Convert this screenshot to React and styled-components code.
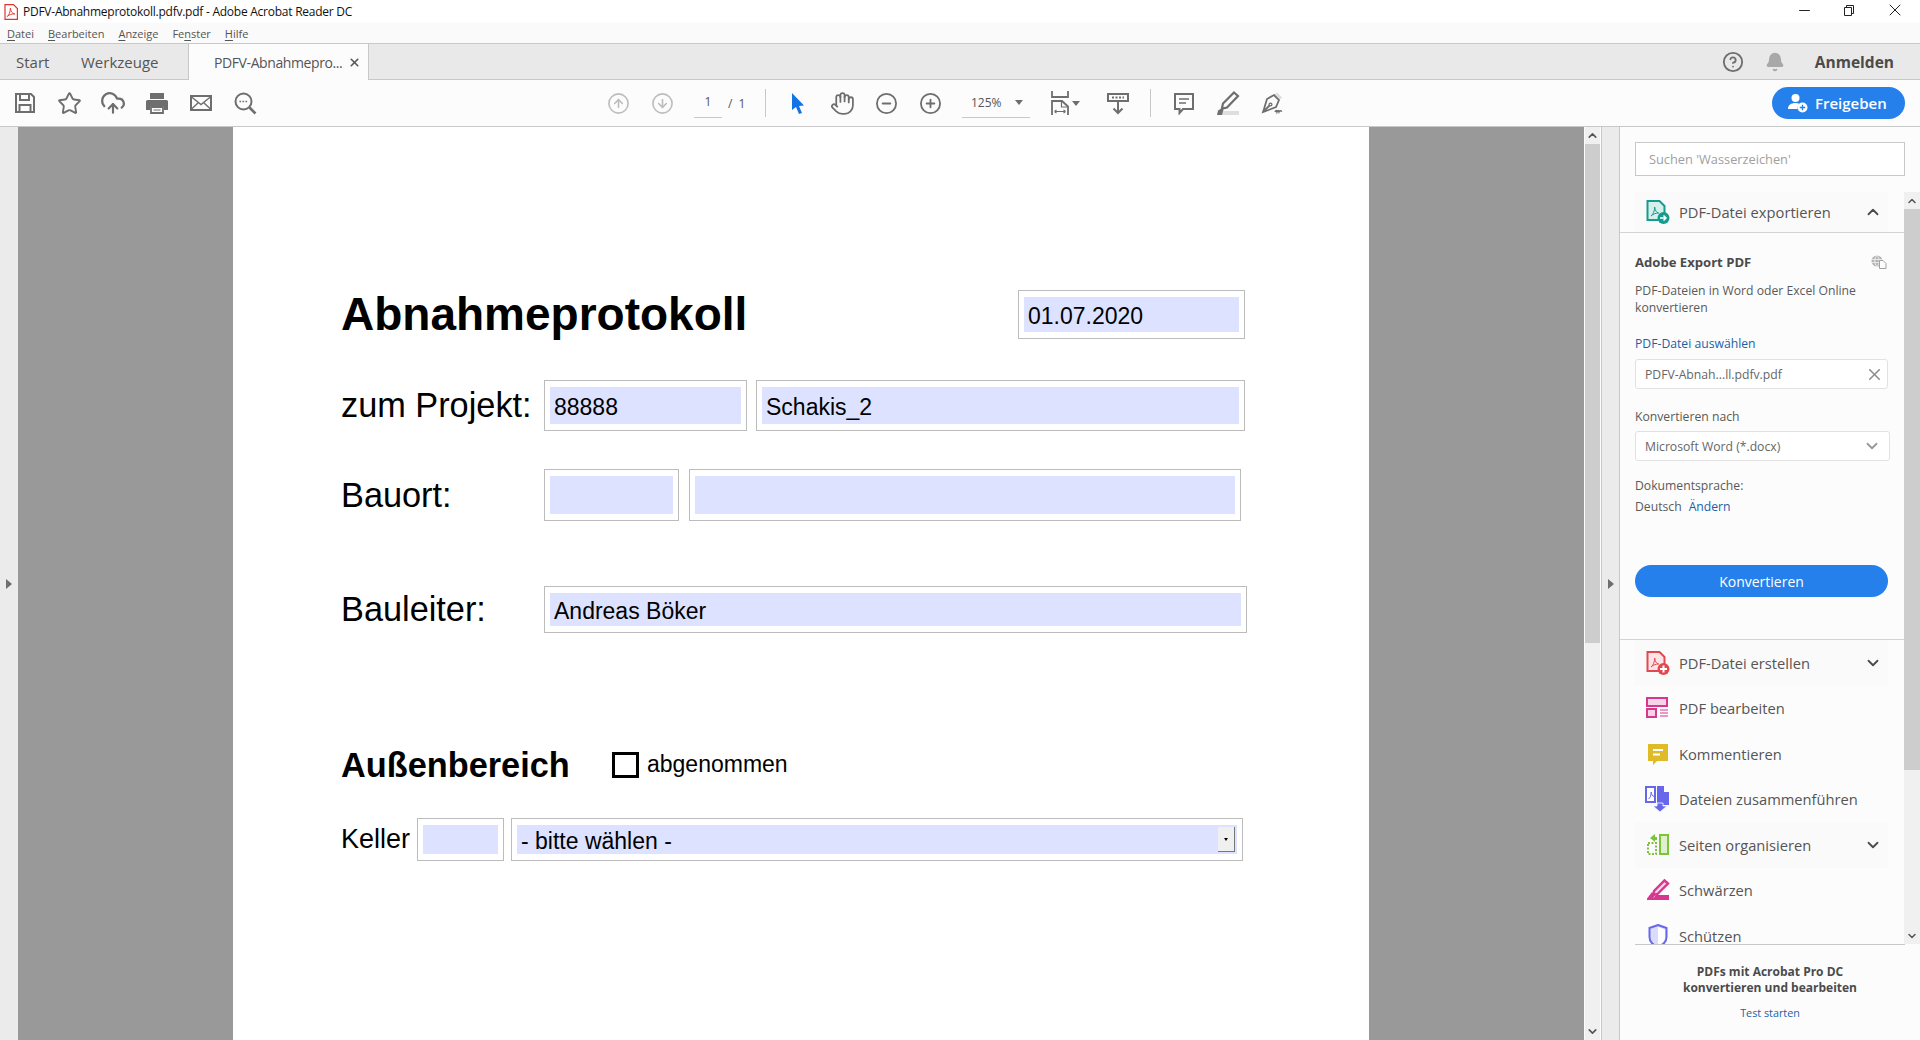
import React from "react";
import styled, { createGlobalStyle } from "styled-components";
import {
  Bell, ChevronDown, ChevronUp, CircleArrowDown, CircleArrowUp, CircleHelp, CircleMinus,
  CirclePlus, CloudUpload, Hand, Minus, Star, X,
} from "lucide-react";

const UI_FONT = `"Open Sans", "Noto Sans", sans-serif`;
const PDF_FONT = `"Liberation Sans", Arial, sans-serif`;

const GlobalStyle = createGlobalStyle`
  html, body { margin: 0; padding: 0; height: 100%; overflow: hidden; background: #fcfcfc; }
  * { box-sizing: border-box; }
  #root { height: 100%; }
`;

const Window = styled.div`
  width: 1920px;
  height: 1040px;
  display: flex;
  flex-direction: column;
  overflow: hidden;
  font-family: ${UI_FONT};
  color: #4b4b4b;
`;

const TitleBar = styled.div`
  height: 23px;
  background: #fff;
  display: flex;
  align-items: center;
  padding-left: 4px;
  font-size: 12px;
  color: #111;
`;
const TitleText = styled.span`
  margin-left: 5px;
  letter-spacing: -0.25px;
`;
const WindowButtons = styled.div`
  margin-left: auto;
  display: flex;
  align-items: center;
  padding: 0 15px 3px 0;
  gap: 31px;
  color: #222;
`;
const MenuBar = styled.div`
  height: 21px;
  background: #fafafa;
  border-bottom: 1px solid #c8c8c8;
  display: flex;
  align-items: center;
  gap: 14px;
  padding-left: 7px;
  font-size: 11px;
  color: #555;
`;
const TabBar = styled.div`
  height: 36px;
  background: #e9e9e9;
  border-bottom: 1px solid #c8c8c8;
  display: flex;
  align-items: stretch;
  font-size: 15px;
  color: #555;
`;
const PlainTab = styled.div`
  display: flex;
  align-items: center;
  margin-left: ${(p) => p.$left}px;
  width: ${(p) => p.$width}px;
`;
const ActiveTab = styled.div`
  width: 181px;
  height: 36px;
  margin-left: 30px;
  padding-left: 25px;
  background: #fcfcfc;
  border-left: 1px solid #c8c8c8;
  border-right: 1px solid #c8c8c8;
  display: flex;
  align-items: center;
  gap: 6px;
  font-size: 14px;
  letter-spacing: -0.4px;
  white-space: nowrap;
`;
const TabTools = styled.div`
  margin-left: auto;
  display: flex;
  align-items: center;
  padding-right: 26px;
  color: #6e6e6e;
`;
const BellSlot = styled.span`
  display: flex;
  margin-left: 21px;
`;
const SignIn = styled.span`
  margin-left: 30px;
  font-weight: 700;
  font-size: 15.5px;
  color: #4b4b4b;
`;

const Toolbar = styled.div`
  height: 47px;
  background: #fcfcfc;
  border-bottom: 1px solid #c8c8c8;
  display: flex;
  align-items: center;
  padding-left: 3px;
`;
const ToolButton = styled.div`
  flex: none;
  width: 44px;
  height: 30px;
  margin-left: ${(p) => p.$left || 0}px;
  display: flex;
  align-items: center;
  justify-content: center;
  gap: ${(p) => p.$gap || 0}px;
  color: ${(p) => p.$color || "#6e6e6e"};
`;
const PageBox = styled.div`
  flex: none;
  width: 28px;
  height: 30px;
  margin-left: 10px;
  border-bottom: 1px solid #c8c8c8;
  text-align: center;
  line-height: 27px;
  font-size: 12px;
  color: #555;
`;
const PageTotal = styled.span`
  flex: none;
  width: 43px;
  padding-left: 6px;
  font-size: 12px;
  color: #555;
  word-spacing: 3px;
`;
const ToolSep = styled.div`
  flex: none;
  width: 1px;
  height: 28px;
  margin-left: ${(p) => p.$left || 0}px;
  background: #c8c8c8;
`;
const ZoomBox = styled.div`
  flex: none;
  width: 68px;
  height: 30px;
  margin-left: 10px;
  padding-left: 9px;
  border-bottom: 1px solid #c8c8c8;
  display: flex;
  align-items: center;
  justify-content: space-between;
  padding-right: 7px;
  font-size: 12px;
  color: #555;
`;
const Caret = styled.i`
  width: 0;
  height: 0;
  border-left: 4px solid transparent;
  border-right: 4px solid transparent;
  border-top: 5px solid #6e6e6e;
`;
const ShareButton = styled.div`
  margin-left: auto;
  margin-right: 15px;
  width: 133px;
  height: 32px;
  border-radius: 16px;
  background: #2680eb;
  color: #fff;
  display: flex;
  align-items: center;
  gap: 7px;
  padding-left: 16px;
  font-size: 15px;
  font-weight: 600;
`;

const Workspace = styled.div`
  flex: 1;
  min-height: 0;
  display: flex;
`;
const SideStrip = styled.div`
  flex: none;
  width: ${(p) => p.$width}px;
  background: #ebebeb;
  display: flex;
  align-items: center;
  justify-content: center;
  border-left: ${(p) => (p.$lined ? "1px solid #c8c8c8" : "none")};
  border-right: ${(p) => (p.$lined ? "1px solid #c8c8c8" : "none")};
`;
const StripArrow = styled.i`
  width: 0;
  height: 0;
  border-top: 5px solid transparent;
  border-bottom: 5px solid transparent;
  border-left: 6px solid #6e6e6e;
`;
const Viewer = styled.div`
  flex: none;
  width: 1566px;
  background: #999;
  display: flex;
  justify-content: center;
  overflow: hidden;
`;
const Scrollbar = styled.div`
  flex: none;
  width: ${(p) => p.$width}px;
  margin-left: ${(p) => p.$left || 0}px;
  margin-right: ${(p) => p.$right || 0}px;
  background: #f0f0f0;
  display: flex;
  flex-direction: column;
  color: #555;
`;
const ScrollArrow = styled.div`
  flex: none;
  height: 17px;
  display: flex;
  align-items: center;
  justify-content: center;
`;
const ScrollThumb = styled.div`
  flex: none;
  height: ${(p) => p.$height}px;
  background: #cdcdcd;
`;
const ScrollTrack = styled.div`
  flex: 1;
`;

const Page = styled.div`
  flex: none;
  width: 1136px;
  background: #fff;
  padding: 163px 0 0 108px;
  font-family: ${PDF_FONT};
  color: #000;
`;
const FormRow = styled.div`
  width: ${(p) => p.$width || 906}px;
  height: ${(p) => p.$height}px;
  margin-top: ${(p) => p.$top || 0}px;
  display: flex;
  align-items: center;
  justify-content: ${(p) => (p.$spread ? "space-between" : "flex-start")};
`;
const Heading = styled.h1`
  margin: 0;
  font-size: 46px;
  font-weight: 700;
  line-height: 49px;
`;
const SubHeading = styled.h2`
  margin: 0;
  width: 271px;
  font-size: 34.3px;
  font-weight: 700;
  line-height: 40px;
`;
const Label = styled.span`
  flex: none;
  width: ${(p) => p.$width}px;
  font-size: ${(p) => p.$size || 34.3}px;
`;
const Field = styled.div`
  flex: none;
  width: ${(p) => p.$width}px;
  height: 100%;
  margin-left: ${(p) => p.$left || 0}px;
  border: 1px solid #bcbcbc;
  padding: 6px 5px;
`;
const FieldFill = styled.div`
  position: relative;
  height: 100%;
  background: #dce2ff;
  display: flex;
  align-items: center;
  padding: 4px 0 0 4px;
  font-size: 23px;
  white-space: pre;
`;
const DropButton = styled.div`
  position: absolute;
  top: 2px;
  right: 2px;
  bottom: 2px;
  width: 17px;
  background: #f0f0f0;
  border-right: 1px solid #777;
  border-bottom: 1px solid #777;
  display: flex;
  align-items: center;
  justify-content: center;
`;
const TinyCaret = styled.i`
  width: 0;
  height: 0;
  border-left: 2px solid transparent;
  border-right: 2px solid transparent;
  border-top: 3px solid #000;
`;
const CheckBox = styled.div`
  flex: none;
  width: 27px;
  height: 26px;
  border: 3px solid #000;
`;
const CheckLabel = styled.span`
  margin: 0 0 2px 8px;
  font-size: 23px;
`;

const Panel = styled.aside`
  flex: none;
  width: 300px;
  background: #fcfcfc;
  display: flex;
  flex-direction: column;
  min-height: 0;
`;
const SearchWrap = styled.div`
  flex: none;
  padding: 15px 15px 16px;
`;
const SearchBox = styled.div`
  height: 34px;
  background: #fff;
  border: 1px solid #c8c8c8;
  display: flex;
  align-items: center;
  padding-left: 13px;
  font-size: 12.8px;
  color: #a0a0a0;
`;
const PanelScroll = styled.div`
  flex: none;
  height: 752px;
  display: flex;
  overflow: hidden;
`;
const PanelList = styled.div`
  flex: none;
  width: 284px;
  overflow: hidden;
`;
const ToolRow = styled.div`
  height: ${(p) => p.$height || 45.5}px;
  margin: 0 16px 0 15px;
  padding: 0 6px 0 10px;
  display: flex;
  align-items: center;
  background: ${(p) => (p.$section ? "#fafafa" : "transparent")};
  font-size: 14.7px;
  color: #555;
`;
const ToolIcon = styled.span`
  flex: none;
  width: 26px;
  height: 24px;
  margin-right: 8px;
  display: flex;
  align-items: center;
  justify-content: center;
`;
const RowChevron = styled.span`
  margin-left: auto;
  display: flex;
  color: #4b4b4b;
`;
const Divider = styled.div`
  height: 1px;
  background: #d4d4d4;
`;
const ExportSection = styled.section`
  height: 406px;
  padding: 19px 15px 0;
  font-size: 12.2px;
  line-height: 17px;
  color: #5a5a5a;
`;
const ExportTitle = styled.div`
  display: flex;
  align-items: center;
  justify-content: space-between;
  height: 20px;
  padding-right: 2px;
  font-size: 13.1px;
  font-weight: 700;
  color: #4b4b4b;
`;
const Text = styled.div`
  margin-top: ${(p) => p.$top}px;
  color: ${(p) => p.$color || "inherit"};
`;
const LinkText = styled.span`
  margin-left: 7px;
  color: #1b5fa8;
`;
const InputBox = styled.div`
  width: ${(p) => p.$width}px;
  height: 30px;
  margin-top: ${(p) => p.$top}px;
  padding: 0 ${(p) => p.$right}px 0 9px;
  background: #fff;
  border: 1px solid #e2e2e2;
  border-radius: 3px;
  display: flex;
  align-items: center;
  justify-content: space-between;
  color: #666;
`;
const ConvertButton = styled.div`
  width: 253px;
  height: 32px;
  margin-top: 50px;
  border-radius: 16px;
  background: #2680eb;
  color: #fff;
  display: flex;
  align-items: center;
  justify-content: center;
  font-size: 14px;
`;
const PanelFooter = styled.div`
  flex: 1;
  margin-left: 15px;
  margin-right: 15px;
  border-top: 1px solid #c8c8c8;
  padding-top: 19px;
  text-align: center;
  font-size: 12px;
  line-height: 15.5px;
  font-weight: 700;
  color: #4b4b4b;
`;
const FooterLink = styled.div`
  margin-top: 10px;
  font-size: 10.8px;
  font-weight: 400;
  color: #1b5fa8;
`;
const U = styled.span`
  text-decoration: underline;
  text-underline-offset: 2px;
`;

const Svg = ({ size = 24, children, ...rest }) => (
  <svg width={size} height={size} viewBox="0 0 24 24" fill="none" stroke="currentColor" strokeWidth="2" {...rest}>
    {children}
  </svg>
);

const PdfFileIcon = () => (
  <svg width="14" height="16" viewBox="0 0 14 16" fill="none" stroke="#e0352b" strokeWidth="1.2">
    <path d="M1 .6h8.5l3.9 3.9v10.9H1z" />
    <path d="M3.2 12.5c2-1.5 3-4.5 3.2-8.5.4 3.5 1.500 5.500 4.500 6-3-.2-5.500.5-7.700 2.500z" strokeWidth="0.9" />
  </svg>
);
const SaveIcon = () => (
  <Svg>
    <path d="M3 3h15l3 3v15H3z" />
    <path d="M7 3v6h9V3M6.500 21v-7h11v7" />
  </Svg>
);
const PrintIcon = () => (
  <svg width="24" height="24" viewBox="0 0 24 24">
    <path fill="currentColor" d="M5 2h14v6H5zM2.500 9h19a1.500 1.500 0 0 1 1.500 1.500V19h-4v-4H5v4H1v-8.500A1.500 1.500 0 0 1 2.500 9z" />
    <path fill="none" stroke="currentColor" strokeWidth="1.800" d="M6 16h12v6H6z" />
    <path stroke="currentColor" d="M8.500 19h7" />
  </svg>
);
const MailIcon = () => (
  <Svg>
    <path d="M2 5h20v14H2z" />
    <path strokeWidth="1.400" d="M2 5.500l10 8 10-8M2 18.500l7.500-7M22 18.500l-7.500-7" />
  </Svg>
);
const FindIcon = () => (
  <Svg>
    <circle cx="10.500" cy="10.500" r="8" />
    <path strokeWidth="2.600" d="M16.500 16.500l6 6" />
    <path strokeWidth="1.600" strokeDasharray="1.600 1.400" d="M6.500 10.500h8" />
  </Svg>
);
const PointerIcon = () => (
  <svg width="18" height="24" viewBox="0 0 18 24">
    <path fill="#1473e6" d="M3 2l12 12.500-5 .5 3 7-3 1-3-7-4 3z" />
  </svg>
);
const FitIcon = () => (
  <svg width="18" height="24" viewBox="0 0 18 24" fill="none" stroke="currentColor" strokeWidth="1.800">
    <path d="M1 0v6h16V0" />
    <path d="M1 24V10h10l6 5.500V24" />
    <path strokeWidth="1.200" d="M10.500 10v6h6.500M3.500 20.500h11M3.500 20.500l2-1.600M3.500 20.500l2 1.600M14.500 20.500l-2-1.600M14.500 20.500l-2 1.600" />
  </svg>
);
const ScrollModeIcon = () => (
  <Svg>
    <rect x="2" y="3" width="20" height="7" strokeWidth="2" />
    <path strokeWidth="2" strokeDasharray="2 1.500" d="M6 6.500h12" />
    <path d="M12 11v11M7.500 17.500L12 22l4.500-4.500" />
  </Svg>
);
const CommentIcon = () => (
  <Svg>
    <path d="M3 3h18v15H11l-3.500 4v-4H3z" />
    <path strokeWidth="1.400" d="M7 8h10M7 12h7" />
  </Svg>
);
const MarkerIcon = () => (
  <svg width="24" height="24" viewBox="0 0 24 24" fill="none" stroke="currentColor" strokeWidth="2.200">
    <path d="M18 1.500l4 3.500-11 11.500-4.500 1-.5-.5 1-4.500z" />
    <path stroke="none" fill="#dedede" d="M6 20h17v4H6z" />
    <path stroke="none" fill="currentColor" d="M2 19.500l4-2.500 1.500 1.500-1.500 5.500H1z" />
  </svg>
);
const SignIcon = () => (
  <Svg>
    <path strokeWidth="1.800" d="M14 4l5 5-3 7-10 4-3 1 1-3 3-10z" />
    <path strokeWidth="1.800" d="M3.500 20.500l6-6" />
    <circle cx="10.500" cy="13.500" r="1.400" strokeWidth="1.300" />
    <path stroke="#dedede" strokeWidth="3" d="M16 2.500l5 5" />
    <path strokeWidth="1.500" d="M15 21c1-2 1.500-2 2 0 .8-2 1.300-2 2 0 .7-1.500 1.500-1.500 3-.5" />
  </Svg>
);
const ShareIcon = () => (
  <svg width="20" height="20" viewBox="0 0 20 20" fill="#fff">
    <circle cx="7.500" cy="5" r="4" />
    <path d="M0 16c0-4 3-6 7.500-6 1.500 0 2.800.2 3.800.7A6 6 0 0 0 9.500 16z" />
    <circle cx="14.500" cy="14.500" r="5" />
    <path stroke="#2680eb" strokeWidth="1.300" d="M14.500 11.800v5.400M11.800 14.500h5.400" />
  </svg>
);
const RestoreIcon = () => (
  <svg width="10" height="11" viewBox="0 0 10 11" fill="none" stroke="#222">
    <path d="M.5 2.500h7v8h-7zM2.500 2.500v-2h7v8h-2" />
  </svg>
);
const OnlineIcon = () => (
  <svg width="16" height="14" viewBox="0 0 16 14">
    <circle cx="6" cy="6" r="5.500" fill="#b4b4b4" />
    <path fill="none" stroke="#fcfcfc" strokeWidth="0.700" d="M.5 4.500h11M.5 7.500h11M6 .5c-3 3-3 8 0 11M6 .5c3 3 3 8 0 11" />
    <path fill="#fcfcfc" stroke="#a0a0a0" d="M8.500 5.500h3.500l3 3v5h-6.500z" />
  </svg>
);
const ExportToolIcon = () => (
  <svg width="24" height="24" viewBox="0 0 24 24" fill="none">
    <path fill="#d6efec" stroke="#149c8e" strokeWidth="2" d="M1.500 1h12l5 5v14h-17z" />
    <path stroke="#149c8e" d="M5 16c2.500-2 3.500-5 3.700-9 .5 3.500 1.500 5.500 4 6-3 0-5.500 1-7.700 3z" />
    <circle cx="17.500" cy="18" r="6" fill="#149c8e" />
    <path stroke="#fff" strokeWidth="1.500" d="M14 18h6M17.500 15.500L20 18l-2.500 2.500" />
  </svg>
);
const CreateToolIcon = () => (
  <svg width="24" height="24" viewBox="0 0 24 24" fill="none">
    <path fill="#fce5e6" stroke="#e34850" strokeWidth="2" d="M1.500 1h12l5 5v14h-17z" />
    <path stroke="#e34850" d="M5 16c2.500-2 3.500-5 3.700-9 .5 3.500 1.500 5.500 4 6-3 0-5.500 1-7.700 3z" />
    <circle cx="17.500" cy="18" r="6" fill="#e34850" />
    <path stroke="#fff" strokeWidth="2" d="M14 18h7M17.500 14.500v7" />
  </svg>
);
const EditToolIcon = () => (
  <svg width="24" height="24" viewBox="0 0 24 24" fill="none" stroke="#d83790">
    <path fill="#f6d3e6" strokeWidth="2" d="M1 2h20v8H1z" />
    <path fill="#f6d3e6" strokeWidth="2" d="M1 13h9v8H1z" />
    <path strokeWidth="1.200" d="M14 14h8M14 17h8M14 20h8" />
  </svg>
);
const CommentToolIcon = () => (
  <svg width="24" height="24" viewBox="0 0 24 24">
    <path fill="#e0bb28" d="M2 2h20v17H11l-4 4v-4H2z" />
    <path stroke="#fff" strokeWidth="1.800" d="M7 8h10M7 12.500h7" />
  </svg>
);
const MergeToolIcon = () => (
  <svg width="26" height="26" viewBox="0 0 26 26" fill="none">
    <path fill="#fff" stroke="#6767ec" strokeWidth="2" d="M1 1h9v15H1z" />
    <path stroke="#6767ec" d="M3.500 13c2-1.500 2.500-4 2.700-7 .4 2.500 1 4 3 4.500" />
    <path fill="#6767ec" d="M12 0h7v6h5v13H12z" />
    <path fill="#6767ec" d="M12 17h6v3h4l-7 6-7-6h4z" stroke="#fcfcfc" strokeWidth="0.800" />
  </svg>
);
const PagesToolIcon = () => (
  <svg width="24" height="24" viewBox="0 0 24 24" fill="none" stroke="#7dc33b">
    <path fill="#dff0d0" strokeWidth="2" d="M14 2h8v19h-8z" />
    <path strokeWidth="2" strokeDasharray="2 1.500" d="M2 10h8v11H2z" />
    <path fill="#7dc33b" stroke="none" d="M4 5l5-4v3h2v3H9v2z" />
  </svg>
);
const RedactToolIcon = () => (
  <svg width="24" height="24" viewBox="0 0 24 24" fill="none">
    <path stroke="#d83790" strokeWidth="2.400" d="M18.500 2.500l3.500 3-10.500 10.500-4 1 .5-4z" fill="#f6d3e6" />
    <path fill="#d83790" d="M6 14l3 3-2 3.500H1zM10 17h13v5H1v-1.500h6z" />
  </svg>
);
const ProtectToolIcon = () => (
  <svg width="24" height="24" viewBox="0 0 24 24">
    <path fill="#d9dcfb" stroke="#6767ec" strokeWidth="2" d="M12 1l8.500 3v9c0 5-3.500 8-8.500 10-5-2-8.500-5-8.500-10V4z" />
    <path fill="#fff" d="M12 3l7 2.500V13c0 4-3 6.500-7 8.500z" />
  </svg>
);

const tools = [
  { name: "PDF-Datei erstellen", icon: <CreateToolIcon />, section: true },
  { name: "PDF bearbeiten", icon: <EditToolIcon /> },
  { name: "Kommentieren", icon: <CommentToolIcon /> },
  { name: "Dateien zusammenführen", icon: <MergeToolIcon /> },
  { name: "Seiten organisieren", icon: <PagesToolIcon />, section: true },
  { name: "Schwärzen", icon: <RedactToolIcon /> },
  { name: "Schützen", icon: <ProtectToolIcon /> },
];

const App = () => {
  return (
    <Window>
      <GlobalStyle />
      <TitleBar>
        <PdfFileIcon />
        <TitleText>PDFV-Abnahmeprotokoll.pdfv.pdf - Adobe Acrobat Reader DC</TitleText>
        <WindowButtons>
          <Minus size={17} strokeWidth={1.4} />
          <RestoreIcon />
          <X size={20} strokeWidth={1.2} />
        </WindowButtons>
      </TitleBar>
      <MenuBar>
        <span><U>D</U>atei</span>
        <span><U>B</U>earbeiten</span>
        <span><U>A</U>nzeige</span>
        <span>Fe<U>n</U>ster</span>
        <span><U>H</U>ilfe</span>
      </MenuBar>
      <TabBar>
        <PlainTab $left={16} $width={32}>Start</PlainTab>
        <PlainTab $left={33} $width={77}>Werkzeuge</PlainTab>
        <ActiveTab>
          <span>PDFV-Abnahmepro...</span>
          <X size={13} strokeWidth={3} />
        </ActiveTab>
        <TabTools>
          <CircleHelp size={22} strokeWidth={2} />
          <BellSlot><Bell size={20} fill="#a8a8a8" stroke="#a8a8a8" /></BellSlot>
          <SignIn>Anmelden</SignIn>
        </TabTools>
      </TabBar>
      <Toolbar>
        <ToolButton><SaveIcon /></ToolButton>
        <ToolButton><Star size={25} strokeWidth={1.8} /></ToolButton>
        <ToolButton><CloudUpload size={26} strokeWidth={2} /></ToolButton>
        <ToolButton><PrintIcon /></ToolButton>
        <ToolButton><MailIcon /></ToolButton>
        <ToolButton><FindIcon /></ToolButton>
        <ToolButton $left={329} $color="#bdbdbd"><CircleArrowUp size={23} strokeWidth={1.7} /></ToolButton>
        <ToolButton $color="#bdbdbd"><CircleArrowDown size={23} strokeWidth={1.7} /></ToolButton>
        <PageBox>1</PageBox>
        <PageTotal>/ 1</PageTotal>
        <ToolSep />
        <ToolButton $left={10}><PointerIcon /></ToolButton>
        <ToolButton><Hand size={25} strokeWidth={1.7} /></ToolButton>
        <ToolButton><CircleMinus size={23} strokeWidth={1.9} /></ToolButton>
        <ToolButton><CirclePlus size={23} strokeWidth={1.9} /></ToolButton>
        <ZoomBox>125%<Caret /></ZoomBox>
        <ToolButton $left={13} $gap={3}><FitIcon /><Caret /></ToolButton>
        <ToolButton $left={9}><ScrollModeIcon /></ToolButton>
        <ToolSep $left={10} />
        <ToolButton $left={11}><CommentIcon /></ToolButton>
        <ToolButton><MarkerIcon /></ToolButton>
        <ToolButton><SignIcon /></ToolButton>
        <ShareButton><ShareIcon />Freigeben</ShareButton>
      </Toolbar>
      <Workspace>
        <SideStrip $width={18}><StripArrow /></SideStrip>
        <Viewer>
          <Page>
            <FormRow $height={49} $width={904} $spread>
              <Heading>Abnahmeprotokoll</Heading>
              <Field $width={227}><FieldFill>01.07.2020</FieldFill></Field>
            </FormRow>
            <FormRow $height={51} $top={41}>
              <Label $width={203}>zum Projekt:</Label>
              <Field $width={203}><FieldFill>88888</FieldFill></Field>
              <Field $width={489} $left={9}><FieldFill>Schakis_2</FieldFill></Field>
            </FormRow>
            <FormRow $height={52} $top={38}>
              <Label $width={203}>Bauort:</Label>
              <Field $width={135}><FieldFill /></Field>
              <Field $width={552} $left={10}><FieldFill /></Field>
            </FormRow>
            <FormRow $height={47} $top={65}>
              <Label $width={203}>Bauleiter:</Label>
              <Field $width={703}><FieldFill>Andreas Böker</FieldFill></Field>
            </FormRow>
            <FormRow $height={40} $top={112}>
              <SubHeading>Außenbereich</SubHeading>
              <CheckBox />
              <CheckLabel>abgenommen</CheckLabel>
            </FormRow>
            <FormRow $height={43} $top={33}>
              <Label $width={76} $size={27}>Keller</Label>
              <Field $width={87}><FieldFill /></Field>
              <Field $width={732} $left={7}>
                <FieldFill>- bitte wählen -<DropButton><TinyCaret /></DropButton></FieldFill>
              </Field>
            </FormRow>
          </Page>
        </Viewer>
        <Scrollbar $width={15} $left={1} $right={1}>
          <ScrollArrow><ChevronUp size={13} strokeWidth={3} /></ScrollArrow>
          <ScrollThumb $height={499} />
          <ScrollTrack />
          <ScrollArrow><ChevronDown size={13} strokeWidth={3} /></ScrollArrow>
        </Scrollbar>
        <SideStrip $width={19} $lined><StripArrow /></SideStrip>
        <Panel>
          <SearchWrap>
            <SearchBox>Suchen 'Wasserzeichen'</SearchBox>
          </SearchWrap>
          <PanelScroll>
            <PanelList>
              <ToolRow $section $height={40}>
                <ToolIcon><ExportToolIcon /></ToolIcon>
                PDF-Datei exportieren
                <RowChevron><ChevronUp size={18} strokeWidth={2.4} /></RowChevron>
              </ToolRow>
              <Divider />
              <ExportSection>
                <ExportTitle>Adobe Export PDF<OnlineIcon /></ExportTitle>
                <Text $top={10}>PDF-Dateien in Word oder Excel Online<br />konvertieren</Text>
                <Text $top={19} $color="#1b5fa8">PDF-Datei auswählen</Text>
                <InputBox $width={253} $top={7} $right={3}>PDFV-Abnah...ll.pdfv.pdf<X size={19} strokeWidth={2} color="#8e8e8e" /></InputBox>
                <Text $top={19}>Konvertieren nach</Text>
                <InputBox $width={255} $top={6} $right={8}>Microsoft Word (*.docx)<ChevronDown size={18} strokeWidth={2.4} color="#999" /></InputBox>
                <Text $top={16}>Dokumentsprache:</Text>
                <Text $top={4}>Deutsch<LinkText>Ändern</LinkText></Text>
                <ConvertButton>Konvertieren</ConvertButton>
              </ExportSection>
              <Divider />
              {tools.map((tool) => (
                <ToolRow key={tool.name} $section={tool.section}>
                  <ToolIcon>{tool.icon}</ToolIcon>
                  {tool.name}
                  {tool.section && <RowChevron><ChevronDown size={18} strokeWidth={2.4} /></RowChevron>}
                </ToolRow>
              ))}
            </PanelList>
            <Scrollbar $width={16}>
              <ScrollArrow><ChevronUp size={12} strokeWidth={3} /></ScrollArrow>
              <ScrollThumb $height={561} />
              <ScrollTrack />
              <ScrollArrow><ChevronDown size={12} strokeWidth={3} /></ScrollArrow>
            </Scrollbar>
          </PanelScroll>
          <PanelFooter>
            PDFs mit Acrobat Pro DC<br />konvertieren und bearbeiten
            <FooterLink>Test starten</FooterLink>
          </PanelFooter>
        </Panel>
      </Workspace>
    </Window>
  );
};

export default App;
